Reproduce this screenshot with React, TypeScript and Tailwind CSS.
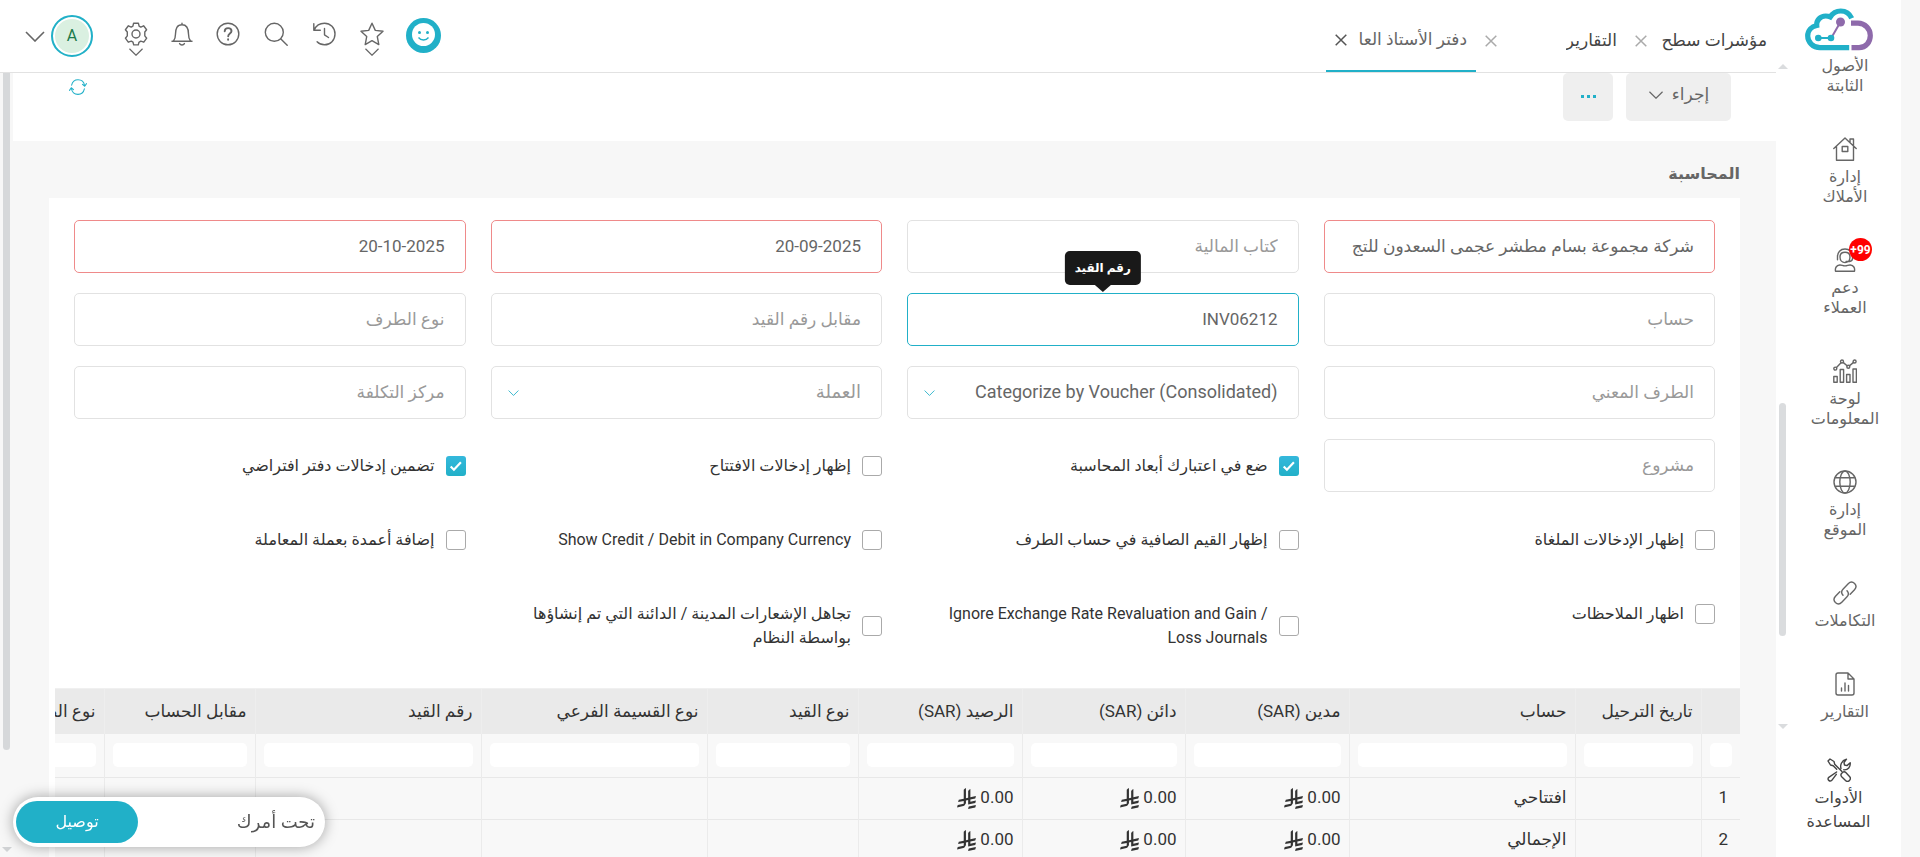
import type { ReactNode } from "react";

type IconProps = { className?: string; children?: ReactNode };

function Line({ className = "size-6", children }: IconProps) {
  return (
    <svg viewBox="0 0 24 24" className={className} fill="none" stroke="currentColor" strokeWidth="1.4" strokeLinecap="round" strokeLinejoin="round" aria-hidden="true">
      {children}
    </svg>
  );
}

const GearIcon = () => (
  <Line>
    <circle cx="12" cy="12" r="4" />
    <path d="M9.6 1.2h4.8l.7 2.9 1.7 1 2.8-1.300 3 3.900-1.800 2.300v3.900l1.900 2.300-2.900 4-3-1-1.900 1.100-.6 2.600H9.700L9 20.200l-1.700-1-3 1-2.900-4 1.900-2.300V10L1.400 7.700l3-3.900 2.800 1.300 1.700-1z" />
  </Line>
);
const BellIcon = () => (
  <Line>
    <path d="M12 1.200v1.600M2 19.300h20M9.600 21.600c.6 1.100 1.400 1.400 2.400 1.400s1.800-.3 2.400-1.400M3.500 19c1.600-2 2-4 2-7 0-5.500 1.600-9.200 6.500-9.200s6.500 3.700 6.500 9.200c0 3 .4 5 2 7" />
  </Line>
);
const HelpIcon = () => (
  <Line>
    <circle cx="12" cy="12" r="10.800" />
    <path strokeWidth="1.900" d="M8.700 9.300c.1-2 1.500-3.200 3.400-3.200 2 0 3.400 1.200 3.400 3 0 2.500-3.300 2.500-3.300 5.200M12.100 17.300v.5" />
  </Line>
);
const SearchIcon = () => (
  <Line>
    <circle cx="10.300" cy="10.300" r="9" />
    <path d="M16.900 16.900l6.300 6.300" />
  </Line>
);
const HistoryIcon = () => (
  <Line>
    <path d="M1.800 1.800v6.500h6.500M2.200 8C4 3.700 8 1.200 12.500 1.200 18.500 1.200 23 6 23 12s-4.500 10.800-10.500 10.800c-3 0-5.500-1-7.400-3M12.500 6.500v6.300l4 2.700" />
  </Line>
);
const StarIcon = () => (
  <Line>
    <path d="M12 1.200l3.300 7.200 7.700.9-5.700 5.300 1.500 8L12 18.700l-6.800 3.900 1.500-8L1 9.300l7.700-.9z" />
  </Line>
);
const Chevron = ({ className = "h-2 w-4" }: IconProps) => (
  <svg viewBox="0 0 20 11" className={className} fill="none" stroke="currentColor" strokeWidth="1.600" aria-hidden="true">
    <path d="M1 1l9 9 9-9" />
  </svg>
);
const Cross = ({ className = "" }: IconProps) => (
  <svg viewBox="0 0 12 12" className={"size-3 " + className} fill="none" stroke="currentColor" strokeWidth="1.500" aria-hidden="true">
    <path d="M.7.7l10.600 10.600M11.300.7L.7 11.300" />
  </svg>
);

const HouseIcon = () => (
  <Line>
    <path d="M.8 11.500L12 1l11.200 10.500M3.500 9.500v13.700h17V9.500M17 5.500V2h3.500v6.800M9.200 9.500h5.600v5H9.200z" />
  </Line>
);
const SupportIcon = () => (
  <Line>
    <path d="M4.500 9.500C4.300 4 7.500 1 12 1s7.700 3 7.500 8.500M4.500 7.500v4.300M19.500 8v2.500c0 1.700-1.200 2.800-3 3h-3.500M7 9c0-3 2-4.700 5-4.700S17 6 17 9c0 3.500-2.200 5.600-5 5.600S7 12.500 7 9zM2.500 23.200c-.6-3.400.9-5.700 4.200-6.200 1.900-.2 3 .9 5.300.9s3.400-1.100 5.300-.9c3.300.5 4.800 2.800 4.200 6.200z" />
  </Line>
);
const ChartIcon = () => (
  <Line>
    <path d="M.8 17.500h3.400v5.800H.8zM7.200 10.500h3.400v12.800H7.200zM13.600 15.500H17v7.800h-3.400zM20 10h3.400v13.300H20zM3.500 8.500l4.300-4.600M10.400 3.600l3.700 3.200M16.600 6.600l3.700-3" />
    <circle cx="2.300" cy="9.600" r="1.500" />
    <circle cx="9" cy="2.500" r="1.500" />
    <circle cx="15.300" cy="7.800" r="1.500" />
    <circle cx="21.600" cy="2.500" r="1.500" />
  </Line>
);
const GlobeIcon = () => (
  <Line>
    <circle cx="12" cy="12" r="11" />
    <ellipse cx="12" cy="12" rx="5.200" ry="11" />
    <path d="M2.400 7.800h19.200M2.400 16.200h19.200" />
  </Line>
);
const LinkIcon = () => (
  <Line>
    <path d="M10 14.300c-2-2.300-1.600-4.600.2-6.400l5-5.200c2-2 4.600-1.900 6.400-.2 1.700 1.800 1.700 4.400-.1 6.300l-4.300 4.400M14 9.700c2 2.300 1.600 4.600-.2 6.400l-5 5.200c-2 2-4.600 1.900-6.400.2-1.700-1.800-1.700-4.400.1-6.300l4.300-4.400" />
  </Line>
);
const ReportIcon = () => (
  <Line>
    <path d="M15 1H5C3.900 1 3 1.900 3 3v18c0 1.100.9 2 2 2h14c1.100 0 2-.9 2-2V7zM15 1v6h6M8.500 19v-3M12 19v-8M15.500 19v-5.500" />
  </Line>
);
const ToolsIcon = () => (
  <Line>
    <path d="M1 3l2-2 4 2.500.7 2.700 7 7M6.200 7.700L3.500 7 1 3M6.200 7.700l3.500 3.500M14.500 15.500l1.300-1.300c1-.6 2.200-.4 3 .4l3.700 3.800c2.500 2.700-1.200 6.600-4 4l-3.800-3.700c-.9-1-1-2.200-.2-3.200zM9.600 14l-7.800 5.300c-2 2.200 1 5 3 3l4.500-6M14 10.500c-1-3 .2-8 5.500-9.300L17 4.600l.5 2.400 2.500.6 3.200-2.800c.5 4-2.200 7.500-6.400 7" />
  </Line>
);

const RiyalIcon = () => (
  <svg viewBox="0 0 1124.140 1256.390" className="h-[21px] w-[19px]" fill="currentColor" role="img" aria-label="ريال سعودي">
    <path d="M699.62 1113.02c-20.06 44.48-33.32 92.75-38.4 143.37l424.51-90.24c20.06-44.47 33.31-92.75 38.4-143.37z" />
    <path d="M1085.73 895.8c20.06-44.47 33.32-92.75 38.4-143.37l-330.68 70.33v-135.2l292.27-62.11c20.06-44.47 33.32-92.75 38.4-143.37l-330.68 70.27V66.13c-50.67 28.45-95.67 66.32-132.25 110.99v403.35l-132.25 28.11V0c-50.67 28.44-95.67 66.32-132.25 110.99v525.69l-295.91 62.88c-20.06 44.47-33.33 92.75-38.42 143.37l334.33-71.05v170.26l-358.3 76.14c-20.06 44.47-33.32 92.75-38.4 143.37l375.04-79.7c30.53-6.35 56.77-24.4 73.83-49.24l68.78-101.97c7.14-10.55 11.3-23.27 11.3-36.97v-149.98l132.25-28.11v270.4z" />
  </svg>
);

const CloudLogo = () => (
  <svg viewBox="0 0 68 43" className="h-[43px] w-[68px]" fill="none" role="img" aria-label="الشعار">
    <path d="M44.200 39.700H15C8 39.700 2.700 34 2.700 28c0-5.500 4-9.500 9-10.500-.5-5 3.500-9.500 9-9.500 2 0 3 .3 4.500 1 2.500-4 6-6 10.500-6 5.300 0 9 2.700 11 7.300" stroke="#21b0c8" strokeWidth="5.200" />
    <path d="M46 15.200h7c7 0 12.300 5.800 12.300 12.300S61 39.700 54 39.700h-7.500" stroke="#8e6aab" strokeWidth="5.200" />
    <path d="M26.500 29.500l9-15.500" stroke="#8e6aab" strokeWidth="2" />
    <path d="M13.500 30h12.500" stroke="#21b0c8" strokeWidth="2" />
    <circle cx="13.300" cy="30" r="3.300" fill="#21b0c8" />
    <circle cx="26" cy="30" r="3.300" fill="#21b0c8" />
    <circle cx="35.500" cy="14" r="4.500" fill="#8e6aab" />
  </svg>
);

type NavItem = { lines: string[]; icon?: ReactNode; badge?: string };

const navItems: NavItem[] = [
  { lines: ["الأصول", "الثابتة"] },
  { lines: ["إدارة", "الأملاك"], icon: <HouseIcon /> },
  { lines: ["دعم", "العملاء"], icon: <SupportIcon />, badge: "+99" },
  { lines: ["لوحة", "المعلومات"], icon: <ChartIcon /> },
  { lines: ["إدارة", "الموقع"], icon: <GlobeIcon /> },
  { lines: ["التكاملات"], icon: <LinkIcon /> },
  { lines: ["التقارير"], icon: <ReportIcon /> },
];

function Sidebar() {
  return (
    <aside className="flex w-[125px] shrink-0 flex-col bg-white">
      <a href="#home" className="flex h-14 shrink-0 items-start justify-center pt-2">
        <CloudLogo />
      </a>
      <div className="flex min-h-0 flex-1 overflow-hidden">
        <nav className="flex flex-1 flex-col gap-[41px] text-base leading-5 text-[#666]">
          {navItems.map((item) => (
            <a key={item.lines.join(" ")} href="#module" className="flex flex-col items-center gap-1.5">
              {item.icon && (
                <span className="relative">
                  {item.icon}
                  {item.badge && (
                    <span dir="ltr" className="absolute -top-2.5 left-4 flex size-[23px] items-center justify-center rounded-full bg-[#f00] text-xs font-bold text-white">
                      {item.badge}
                    </span>
                  )}
                </span>
              )}
              <span className="text-center">
                {item.lines.map((l) => (
                  <span key={l} className="block">{l}</span>
                ))}
              </span>
            </a>
          ))}
        </nav>
        <div className="flex w-[13px] flex-col items-center pt-2 pb-[3px]" aria-hidden="true">
          <span className="border-x-[5px] border-b-[5px] border-x-transparent border-b-[#dadcde]" />
          <span className="mt-[334px] mb-auto h-[233px] w-[7px] shrink-0 rounded-full bg-[#dadcde]" />
          <span className="border-x-[5px] border-t-[5px] border-x-transparent border-t-[#dadcde]" />
        </div>
      </div>
      <a href="#tools" className="flex h-[125px] shrink-0 flex-col items-center gap-1 pt-[26px] text-base leading-6 text-[#444]">
        <ToolsIcon />
        <span className="text-center">
          <span className="block">الأدوات</span>
          <span className="block">المساعدة</span>
        </span>
      </a>
    </aside>
  );
}

const tabs = [
  { title: "مؤشرات سطح", active: false },
  { title: "التقارير", active: false },
  { title: "دفتر الأستاذ العا", active: true },
];

function Header() {
  return (
    <header className="flex h-[73px] shrink-0 justify-between border-b border-[#e2e2e2] bg-white text-[#666]">
      <div className="flex">
        {tabs.map((t) => (
          <div
            key={t.title}
            className={
              t.active
                ? "flex w-[150px] items-center justify-between gap-2 border-b-2 border-[#21b0c8] px-[9px] pt-2.5"
                : "flex w-[150px] items-center justify-between gap-2 px-[9px] pt-2.5 text-[#444]"
            }
          >
            <a href="#tab" className="overflow-hidden text-[17px] whitespace-nowrap">{t.title}</a>
            <button type="button" aria-label="إغلاق" className={t.active ? "text-[#555]" : "text-[#aaa]"}>
              <Cross />
            </button>
          </div>
        ))}
      </div>
      <div dir="ltr" className="flex items-start gap-6 pt-[15px] pl-[25px]">
        <button type="button" aria-label="A" className="mr-[7px] flex items-center gap-[6px]">
          <Chevron className="h-[11px] w-5" />
          <span className="flex size-[42px] items-center justify-center rounded-full border-2 border-[#21b0c8] bg-[#daf0e1] text-base text-[#1c7a4b] ring-2 ring-white ring-inset">A</span>
        </button>
        <button type="button" aria-label="الإعدادات" className="flex flex-col items-center gap-0.5 pt-[7px]">
          <GearIcon />
          <Chevron />
        </button>
        <button type="button" aria-label="الإشعارات" className="-mx-0.5 pt-[7px]"><BellIcon /></button>
        <button type="button" aria-label="المساعدة" className="pt-[7px]"><HelpIcon /></button>
        <button type="button" aria-label="بحث" className="pt-[7px]"><SearchIcon /></button>
        <button type="button" aria-label="السجل" className="pt-[7px]"><HistoryIcon /></button>
        <button type="button" aria-label="المفضلة" className="flex flex-col items-center gap-0.5 pt-[7px]">
          <StarIcon />
          <Chevron />
        </button>
        <button type="button" aria-label="المساعد" className="-ml-0.5 pt-[3px]">
          <svg viewBox="0 0 35 35" className="size-[35px]" aria-hidden="true">
            <circle cx="17.500" cy="17.500" r="17.500" fill="#21b0c8" />
            <circle cx="17.500" cy="16.500" r="11.500" fill="#fff" />
            <circle cx="13.500" cy="14.500" r="1.500" fill="#21b0c8" />
            <circle cx="21.500" cy="14.500" r="1.500" fill="#21b0c8" />
            <path d="M12.500 19.500c2.500 3.300 7.500 3.300 10 0" fill="none" stroke="#21b0c8" strokeWidth="1.300" />
          </svg>
        </button>
      </div>
    </header>
  );
}

type FieldDef = { label: string; value?: string; tone?: "required" | "focus"; select?: boolean; tooltip?: string };

const fields: FieldDef[] = [
  { label: "الشركة", value: "شركة مجموعة بسام مطشر عجمى السعدون للتج", tone: "required" },
  { label: "كتاب المالية" },
  { label: "من تاريخ", value: "20-09-2025", tone: "required" },
  { label: "إلى تاريخ", value: "20-10-2025", tone: "required" },
  { label: "حساب" },
  { label: "رقم القيد", value: "INV06212", tone: "focus", tooltip: "رقم القيد" },
  { label: "مقابل رقم القيد" },
  { label: "نوع الطرف" },
  { label: "الطرف المعني" },
  { label: "التصنيف حسب", value: "Categorize by Voucher (Consolidated)", select: true },
  { label: "العملة", select: true },
  { label: "مركز التكلفة" },
  { label: "مشروع" },
];

function Field({ f }: { f: FieldDef }) {
  const border = f.tone === "required" ? "border-[#ef8a8a]" : f.tone === "focus" ? "border-[#21b0c8]" : "border-[#e2e2e2]";
  const base = "h-[53px] w-full rounded-[5px] border bg-white px-5 pb-0.5 outline-none placeholder:text-[#999] ";
  return (
    <div className="relative">
      {f.select ? (
        <>
          <select aria-label={f.label} className={base + border + (f.value ? " appearance-none text-lg text-[#666]" : " appearance-none text-lg text-[#999]")}>
            <option>{f.value ?? f.label}</option>
          </select>
          <Chevron className="pointer-events-none absolute top-6 left-[17px] h-1.5 w-[11px] text-[#21b0c8]" />
        </>
      ) : (
        <input aria-label={f.label} placeholder={f.label} defaultValue={f.value} className={base + border + " text-[17px] text-[#666]"} />
      )}
      {f.tooltip && (
        <div role="tooltip" className="absolute bottom-full left-1/2 z-10 mb-2 flex h-[34px] -translate-x-1/2 items-center rounded-[5px] bg-[#191919] px-[10px] text-xs font-bold whitespace-nowrap text-white">
          {f.tooltip}
          <span className="absolute top-full left-1/2 -translate-x-1/2 border-x-8 border-t-[7px] border-x-transparent border-t-[#191919]" />
        </div>
      )}
    </div>
  );
}

type CheckDef = { label: string; checked?: boolean };

const checks: CheckDef[] = [
  { label: "ضع في اعتبارك أبعاد المحاسبة", checked: true },
  { label: "إظهار إدخالات الافتتاح" },
  { label: "تضمين إدخالات دفتر افتراضي", checked: true },
  { label: "إظهار الإدخالات الملغاة" },
  { label: "إظهار القيم الصافية في حساب الطرف" },
  { label: "Show Credit / Debit in Company Currency" },
  { label: "إضافة أعمدة بعملة المعاملة" },
  { label: "اظهار الملاحظات" },
  { label: "Ignore Exchange Rate Revaluation and Gain / Loss Journals" },
  { label: "تجاهل الإشعارات المدينة / الدائنة التي تم إنشاؤها بواسطة النظام" },
];

function Check({ c }: { c: CheckDef }) {
  return (
    <label className="flex items-center gap-[11px] self-start py-[15px] text-base leading-6 text-[#333]">
      <span className="grid shrink-0">
        <input
          type="checkbox"
          defaultChecked={c.checked}
          className="peer col-start-1 row-start-1 size-5 appearance-none rounded-[3px] border border-[#aaa] bg-white checked:border-0 checked:bg-gradient-to-b checked:from-[#34b8dc] checked:to-[#21b0c8]"
        />
        <svg viewBox="0 0 20 20" className="pointer-events-none col-start-1 row-start-1 hidden size-5 peer-checked:block" fill="none" stroke="#fff" strokeWidth="2.200" aria-hidden="true">
          <path d="M4.700 10.500l3.200 3.200 7-7.500" />
        </svg>
      </span>
      <span dir="auto" className="max-w-[345px] text-right">{c.label}</span>
    </label>
  );
}

const columns = [
  { title: "", col: "w-[39px]" },
  { title: "تاريخ الترحيل", col: "w-[126px]" },
  { title: "حساب", col: "w-[226px]" },
  { title: "مدين (SAR)", col: "w-[164px]" },
  { title: "دائن (SAR)", col: "w-[163px]" },
  { title: "الرصيد (SAR)", col: "w-[164px]" },
  { title: "نوع القيد", col: "w-[151px]" },
  { title: "نوع القسيمة الفرعي", col: "w-[226px]" },
  { title: "رقم القيد", col: "w-[226px]" },
  { title: "مقابل الحساب", col: "w-[151px]" },
  { title: "نوع الطرف", col: "w-[151px]" },
];
const rows = ["افتتاحي", "الإجمالي"];

function Ledger() {
  return (
    <div className="ml-[6px] overflow-hidden border-t border-[#f0f0f0]">
      <table className="w-[1787px] table-fixed border-collapse bg-[#f8f8f8] text-[17px] text-[#333]">
        <colgroup>
          {columns.map((c, i) => <col key={i} className={c.col} />)}
        </colgroup>
        <thead>
          <tr className="h-[45px] bg-[#eaeaea]">
            {columns.map((c, i) => (
              <th key={i} scope="col" className="overflow-hidden border-l border-[#eee] px-2 text-right font-normal whitespace-nowrap">{c.title}</th>
            ))}
          </tr>
          <tr className="h-[43px] border-b border-[#e8e8e8]">
            {columns.map((c, i) => (
              <td key={i} className="border-l border-[#ebebeb] px-2">
                <input aria-label={"تصفية " + c.title} className="block h-6 w-full rounded-[5px] bg-white px-1 outline-none" />
              </td>
            ))}
          </tr>
        </thead>
        <tbody>
          {rows.map((name, r) => (
            <tr key={name} className="h-[42px] border-b border-[#e8e8e8]">
              {columns.map((_, i) => (
                <td key={i} className={i === 0 ? "border-l border-[#ebebeb] px-3" : "border-l border-[#ebebeb] px-2 whitespace-nowrap"}>
                  {i === 0 && r + 1}
                  {i === 2 && name}
                  {i >= 3 && i <= 5 && (
                    <span className="flex items-center gap-1">
                      0.00
                      <RiyalIcon />
                    </span>
                  )}
                </td>
              ))}
            </tr>
          ))}
        </tbody>
      </table>
    </div>
  );
}

export default function App() {
  return (
    <div dir="rtl" className="flex h-screen overflow-hidden bg-[#f7f7f7] pr-[19px] font-['Roboto','DejaVu_Sans',sans-serif] text-[#666]">
      <Sidebar />
      <div className="flex min-w-0 flex-1 flex-col">
        <Header />
        <div className="flex min-h-0 flex-1">
          <main className="min-w-0 flex-1 overflow-hidden">
            <div className="flex h-[68px] items-start justify-between bg-white pr-[45px] pl-14">
              <div className="flex gap-[13px]">
                <button type="button" className="flex h-12 w-[105px] items-center justify-center gap-2 rounded-[5px] bg-[#efefef] pb-1 text-[17px]">
                  إجراء
                  <Chevron />
                </button>
                <button type="button" aria-label="المزيد" className="flex h-12 w-[50px] items-center justify-center gap-[3px] rounded-[5px] bg-[#efefef] pb-0.5">
                  <span className="size-[3px] bg-[#21b0c8]" />
                  <span className="size-[3px] bg-[#21b0c8]" />
                  <span className="size-[3px] bg-[#21b0c8]" />
                </button>
              </div>
              <button type="button" aria-label="تحديث" className="pt-[5px] text-[#21b0c8]">
                <Line className="size-[18px]">
                  <path d="M3.500 9.500C4.500 5 8 2.200 12 2.200c4.500 0 8 3 8.800 7.800M18 8.500l3 2.500 2.300-3.500M20.500 14.500c-1 4.500-4.500 7.300-8.500 7.300-4.500 0-8-3-8.800-7.800M6 15.500L3 13 .7 16.500" />
                </Line>
              </button>
            </div>
            <div className="pr-9 pl-9">
              <h2 className="flex h-[57px] items-center pt-2 text-base font-bold">المحاسبة</h2>
              <section className="bg-white">
                <div className="grid grid-cols-4 gap-x-[25px] gap-y-5 px-[25px] pt-[22px] pb-[23px]">
                  {fields.map((f) => <Field key={f.label} f={f} />)}
                  {checks.map((c) => <Check key={c.label} c={c} />)}
                </div>
                <Ledger />
              </section>
            </div>
          </main>
          <div className="flex w-[13px] flex-col items-center justify-between pb-[5px]" aria-hidden="true">
            <span className="h-[677px] w-[7px] rounded-b-full bg-[#d6d8da]" />
            <span className="border-x-[5px] border-t-[5px] border-x-transparent border-t-[#d0d2d4]" />
          </div>
        </div>
      </div>
      <div className="fixed bottom-[10px] left-[13px] z-20 flex h-[50px] w-[312px] items-center justify-between rounded-full bg-white pr-[10px] pl-[3px] text-lg text-[#555] shadow-[0_0_14px_rgba(0,0,0,0.35)]">
        <span>تحت أمرك</span>
        <button type="button" className="h-[42px] w-[122px] rounded-full bg-[#21b0c8] text-base text-white">توصيل</button>
      </div>
    </div>
  );
}
